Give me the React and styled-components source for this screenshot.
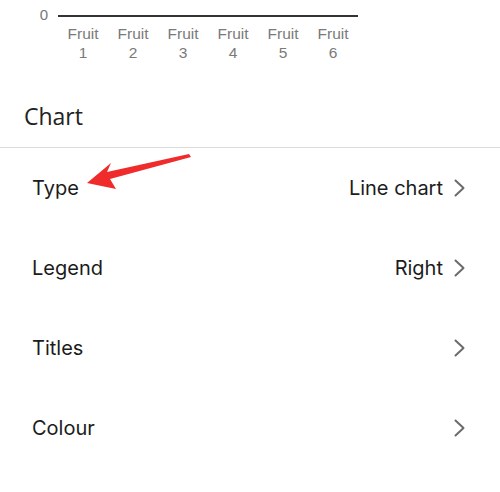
import React from 'react';
import styled, { createGlobalStyle } from 'styled-components';

const GlobalStyle = createGlobalStyle`
    html, body {
        margin: 0;
        padding: 0;
        background: #ffffff;
    }
    body {
        font-family: Inter, "Liberation Sans", Arial, sans-serif;
    }
`;

const Page = styled.div`
    position: relative;
    width: 500px;
    height: 492px;
    overflow: hidden;
    background: #ffffff;
`;

const ChartArea = styled.div`
    height: 84px;
    display: flex;
    align-items: flex-start;
    padding-top: 6px;
    box-sizing: border-box;
`;

const AxisLabel = styled.div`
    width: 58px;
    box-sizing: border-box;
    padding-right: 10px;
    text-align: right;
    font-family: "Liberation Sans", Arial, sans-serif;
    font-size: 15px;
    line-height: 18px;
    color: #777777;
`;

const Axis = styled.div`
    width: 300px;
    display: flex;
    flex-direction: column;
`;

const AxisLine = styled.div`
    height: 1.5px;
    margin-top: 9px;
    background: #333333;
`;

const Categories = styled.div`
    display: grid;
    grid-template-columns: repeat(6, 50px);
    margin-top: 7px;
`;

const Category = styled.div`
    text-align: center;
    font-family: "Liberation Sans", Arial, sans-serif;
    font-size: 15.5px;
    line-height: 19px;
    color: #7a7a7a;
`;

const Header = styled.div`
    height: 64px;
    display: flex;
    align-items: center;
    padding-left: 24px;
    border-bottom: 1px solid #dcdcdc;
    box-sizing: border-box;
    font-family: "Open Sans", Roboto, sans-serif;
    font-size: 23px;
    color: #222222;
`;

const List = styled.div`
    display: flex;
    flex-direction: column;
`;

const Row = styled.div`
    height: 80px;
    display: flex;
    align-items: center;
    justify-content: space-between;
    padding: 0 34px 0 32px;
    font-size: 20px;
    color: #1c1c1c;
`;

const Value = styled.div`
    display: flex;
    align-items: center;
    gap: 10px;
`;

const Chevron = styled.svg`
    width: 13px;
    height: 18px;
    flex: none;
`;

const Arrow = styled.svg`
    position: absolute;
    left: 0;
    top: 0;
    pointer-events: none;
`;

const rows = [
    { label: 'Type', value: 'Line chart' },
    { label: 'Legend', value: 'Right' },
    { label: 'Titles', value: '' },
    { label: 'Colour', value: '' },
];

function ChevronIcon() {
    return (
        <Chevron viewBox="0 0 13 18">
            <path d="M2.5 1.5 L10.5 9 L2.5 16.5" fill="none" stroke="#6b6b6b" strokeWidth="2" strokeLinecap="round" strokeLinejoin="round" />
        </Chevron>
    );
}

export default function App() {
    return (
        <Page>
            <GlobalStyle />
            <ChartArea>
                <AxisLabel>0</AxisLabel>
                <Axis>
                    <AxisLine />
                    <Categories>
                        {[1, 2, 3, 4, 5, 6].map(n => (
                            <Category key={n}>
                                Fruit
                                <br />
                                {n}
                            </Category>
                        ))}
                    </Categories>
                </Axis>
            </ChartArea>
            <Header>Chart</Header>
            <List>
                {rows.map(r => (
                    <Row key={r.label}>
                        <span>{r.label}</span>
                        <Value>
                            {r.value && <span>{r.value}</span>}
                            <ChevronIcon />
                        </Value>
                    </Row>
                ))}
            </List>
            <Arrow width="500" height="492" viewBox="0 0 500 492">
                <polygon
                    points="87,183 111,163 107,172 189,154 191,157 110,179 116,189"
                    fill="#ef2b2b"
                />
            </Arrow>
        </Page>
    );
}
